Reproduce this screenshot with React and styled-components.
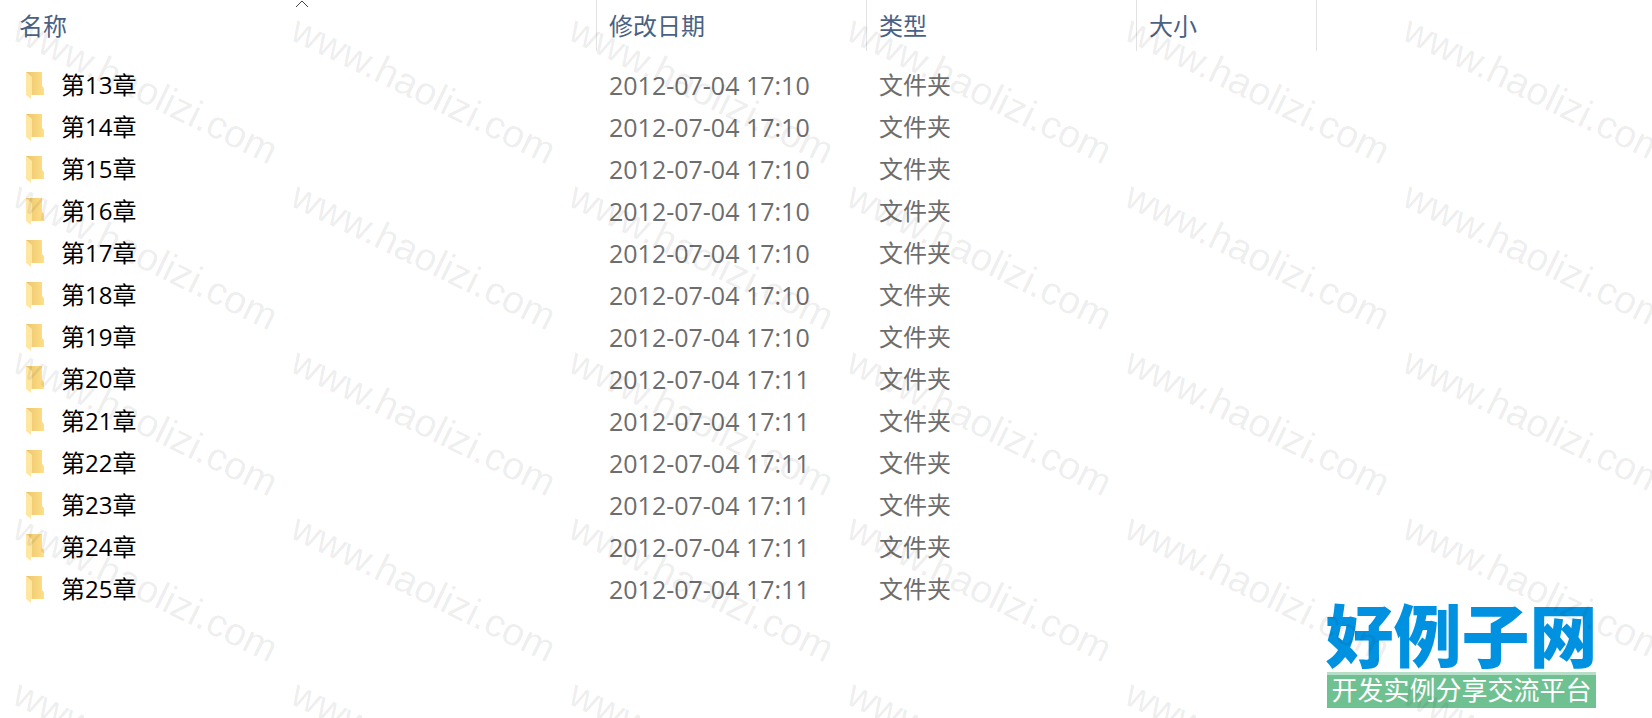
import React, { useState } from "react";
import styled, { createGlobalStyle } from "styled-components";

const WATERMARK_COUNT = 30;

const initialFolders = [
  { name: "第13章", date: "2012-07-04 17:10" },
  { name: "第14章", date: "2012-07-04 17:10" },
  { name: "第15章", date: "2012-07-04 17:10" },
  { name: "第16章", date: "2012-07-04 17:10" },
  { name: "第17章", date: "2012-07-04 17:10" },
  { name: "第18章", date: "2012-07-04 17:10" },
  { name: "第19章", date: "2012-07-04 17:10" },
  { name: "第20章", date: "2012-07-04 17:11" },
  { name: "第21章", date: "2012-07-04 17:11" },
  { name: "第22章", date: "2012-07-04 17:11" },
  { name: "第23章", date: "2012-07-04 17:11" },
  { name: "第24章", date: "2012-07-04 17:11" },
  { name: "第25章", date: "2012-07-04 17:11" },
];

const FolderIcon = () => (
  <StFolder viewBox="0 0 19 27" aria-hidden="true">
    <defs>
      <linearGradient id="back" x1="0" x2="1">
        <stop offset="0" stopColor="#ebc56c" />
        <stop offset="1" stopColor="#ffdf88" />
      </linearGradient>
    </defs>
    <path d="M0 0H16V14L18 16V23H4L0 20Z" fill="url(#back)" />
    <path d="M0 0L6 5V23H5V27L0 23Z" fill="#ffe7a2" />
  </StFolder>
);

const App = () => {
  const [ascending, setAscending] = useState(true);
  const folders = ascending ? initialFolders : [...initialFolders].reverse();

  return (
    <Explorer>
      <GlobalStyle />
      <FileTable>
        <colgroup>
          <Col $width="590px" />
          <Col $width="270px" />
          <Col $width="270px" />
          <Col $width="180px" />
          <Col $width="auto" />
        </colgroup>
        <thead>
          <tr>
            <HeadCell scope="col">
              <HeadButton type="button" onClick={() => setAscending(!ascending)}>
                名称
                <SortArrow viewBox="0 0 14 8" $flip={!ascending} aria-hidden="true">
                  <path d="M1 7L7 1L13 7" fill="none" stroke="#444" />
                </SortArrow>
              </HeadButton>
            </HeadCell>
            <HeadCell scope="col">
              <HeadButton type="button">修改日期</HeadButton>
            </HeadCell>
            <HeadCell scope="col">
              <HeadButton type="button">类型</HeadButton>
            </HeadCell>
            <HeadCell scope="col">
              <HeadButton type="button">大小</HeadButton>
            </HeadCell>
            <td />
          </tr>
        </thead>
        <FolderList>
          {folders.map((folder) => (
            <tr key={folder.name}>
              <Cell>
                <FolderName>
                  <FolderIcon />
                  {folder.name}
                </FolderName>
              </Cell>
              <Cell $muted $size="25px">
                {folder.date}
              </Cell>
              <Cell $muted>文件夹</Cell>
              <Cell />
              <td />
            </tr>
          ))}
        </FolderList>
      </FileTable>

      <SiteLogo>
        <LogoTitle>好例子网</LogoTitle>
        <LogoSlogan>开发实例分享交流平台</LogoSlogan>
      </SiteLogo>

      <Watermarks aria-hidden="true">
        {Array.from({ length: WATERMARK_COUNT }, (_, i) => (
          <Watermark key={i}>www.haolizi.com</Watermark>
        ))}
      </Watermarks>
    </Explorer>
  );
};

export default App;

const GlobalStyle = createGlobalStyle`
  body {
    margin: 0;
    background: #fff;
    font-family: "Open Sans", "Noto Sans CJK SC", sans-serif;
    font-size: 24px;
  }
`;

const Explorer = styled.main`
  position: relative;
  min-height: 100vh;
  padding-left: 7px;
  box-sizing: border-box;
  overflow: hidden;
`;

const FileTable = styled.table`
  width: 100%;
  table-layout: fixed;
  border-collapse: collapse;
`;

const Col = styled.col`
  width: ${(props) => props.$width};
`;

const HeadCell = styled.th`
  height: 51px;
  padding: 0;
  font-weight: 400;
`;

const HeadButton = styled.button`
  position: relative;
  display: block;
  width: 100%;
  height: 51px;
  padding: 0 12px;
  border: 0;
  border-right: 1px solid #e2e2e2;
  background: none;
  color: #4a6184;
  font: inherit;
  line-height: 51px;
  text-align: left;
`;

const SortArrow = styled.svg`
  position: absolute;
  top: 0;
  left: 50%;
  width: 14px;
  height: 8px;
  transform: translateX(-50%) ${(props) => (props.$flip ? "scaleY(-1)" : "")};
`;

const FolderList = styled.tbody`
  &::before {
    content: "";
    display: block;
    height: 13px;
  }
`;

const Cell = styled.td`
  height: 42px;
  padding: 0 12px;
  color: ${(props) => (props.$muted ? "#6d6d6d" : "#000")};
  font-size: ${(props) => props.$size || "24px"};
  line-height: 42px;
  white-space: nowrap;
`;

const FolderName = styled.div`
  display: flex;
  align-items: center;
  gap: 16px;
  padding-left: 7px;
`;

const StFolder = styled.svg`
  width: 19px;
  height: 27px;
`;

const SiteLogo = styled.div`
  position: absolute;
  right: 56px;
  bottom: 10px;
  width: 269px;
`;

const LogoTitle = styled.div`
  display: flex;
  justify-content: center;
  padding-bottom: 2px;
  color: #0092e0;
  font-size: 68px;
  font-weight: 900;
  line-height: 68px;
  white-space: nowrap;
`;

const LogoSlogan = styled.div`
  border-top: 3px solid #b5dfc6;
  background: #70c192;
  color: #fff;
  font-size: 26px;
  line-height: 31px;
  padding-bottom: 2px;
  text-align: center;
`;

const Watermarks = styled.div`
  position: absolute;
  inset: 0;
  display: grid;
  grid-template-columns: repeat(6, 278px);
  grid-auto-rows: 166px;
  padding: 7px 0 0 16px;
  overflow: hidden;
  pointer-events: none;
`;

const Watermark = styled.span`
  color: rgba(0, 0, 0, 0.08);
  font-family: "Liberation Sans", Arial, sans-serif;
  font-size: 39px;
  line-height: 40px;
  transform: rotate(26deg);
  transform-origin: 0 20px;
`;
